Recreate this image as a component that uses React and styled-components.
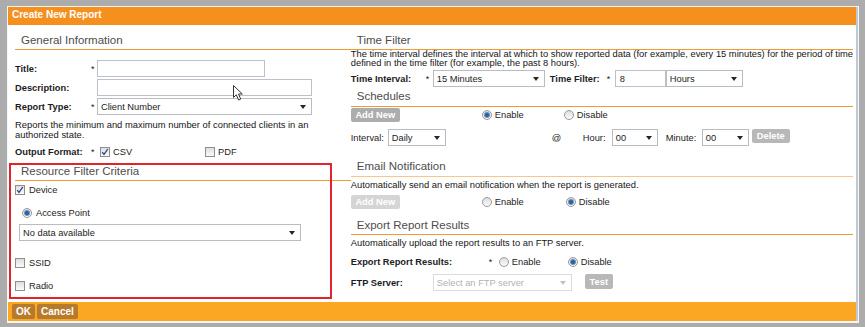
import React from 'react';
import styled, { createGlobalStyle } from 'styled-components';

const Global = createGlobalStyle`
  html, body { margin: 0; padding: 0; background: #acacac; }
  body { font-family: "Liberation Sans", Arial, sans-serif; color: #1c1c1c; }
`;

const Frame = styled.div`
  width: 865px;
  height: 327px;
  box-sizing: border-box;
  padding: 6px 6px 4px 7px;
  background: #acacac;
`;

const Chrome = styled.div`
  background: #f6f6f6;
  padding: 1px 1px 2px 1px;
`;

const Dialog = styled.div`
  position: relative;
  height: 314px;
  border-right: 2px solid #c3c8d5;
  background: #fff;
  display: flex;
  flex-direction: column;
`;

const TitleBar = styled.div`
  height: 18px;
  background: #f5901f;
  color: #fff;
  font-weight: bold;
  font-size: 10px;
  line-height: 16px;
  padding-left: 4px;
`;

const Body = styled.div`
  height: 277px;
  display: flex;
`;

const LeftCol = styled.div`
  width: 343px;
  box-sizing: border-box;
  padding-left: 7px;
  display: flex;
  flex-direction: column;
`;

const RightCol = styled.div`
  flex: 1;
  padding-right: 3px;
  display: flex;
  flex-direction: column;
`;

const Header = styled.div`
  font-size: 11.5px;
  line-height: 14px;
  color: #4d4d4d;
  padding: ${p => p.$pt}px 0 ${p => p.$pb}px 6px;
  border-bottom: 1px solid ${p => p.$light ? '#f8c590' : '#f29a3a'};
`;

const Row = styled.div`
  display: flex;
  align-items: center;
  height: ${p => p.$h || 17}px;
  margin-top: ${p => p.$mt || 0}px;
  padding-left: ${p => p.$pl || 0}px;
  font-size: 9.3px;
`;

const Label = styled.span`
  width: ${p => p.$w}px;
  flex: none;
  font-weight: bold;
  font-size: 9.3px;
  color: #1c1c1c;
  white-space: nowrap;
  margin-left: ${p => p.$ml || 0}px;
`;

const Star = styled.span`
  width: ${p => p.$w}px;
  flex: none;
  font-size: 9px;
  color: #222;
`;

const Para = styled.div`
  font-size: ${p => p.$fs || 9.4}px;
  line-height: ${p => p.$lh || 10}px;
  margin-top: ${p => p.$mt || 0}px;
  color: #151515;
  white-space: nowrap;
`;

const TextBox = styled.div`
  width: ${p => p.$w}px;
  height: ${p => p.$h || 17}px;
  box-sizing: border-box;
  border: 1px solid #bcc0c8;
  background: #fff;
  flex: none;
  display: flex;
  align-items: center;
  padding-left: 4px;
  font-size: 9.3px;
`;

const SelectBox = styled.div`
  width: ${p => p.$w}px;
  height: 17px;
  box-sizing: border-box;
  border: 1px solid ${p => p.$disabled ? '#dcdcdc' : '#b8bcc5'};
  background: #fff;
  flex: none;
  display: flex;
  align-items: center;
  justify-content: space-between;
  padding: 0 5px 0 3px;
  font-size: 9.3px;
  color: ${p => p.$disabled ? '#b2b2b2' : '#1c1c1c'};
  margin-left: ${p => p.$ml || 0}px;
`;

const Arrow = styled.span`
  width: 0;
  height: 0;
  border-left: 3.5px solid transparent;
  border-right: 3.5px solid transparent;
  border-top: 4.5px solid ${p => p.$disabled ? '#c2c2c2' : '#262626'};
`;

const GrayButton = styled.span`
  display: inline-flex;
  align-items: center;
  justify-content: center;
  flex: none;
  width: ${p => p.$w}px;
  height: ${p => p.$h || 14}px;
  margin-left: ${p => p.$ml || 0}px;
  align-self: ${p => p.$top ? 'flex-start' : 'center'};
  background: ${p => (p.$disabled ? '#d5d5d5' : p.$tone || '#adadad')};
  color: #fff;
  font-weight: bold;
  font-size: 9.3px;
  border-radius: 2px;
`;

const Box = styled.span`
  width: 10px;
  height: 10px;
  box-sizing: border-box;
  border: 1px solid #8e8e8e;
  background: linear-gradient(#dedede, #fbfbfb);
  display: inline-flex;
  align-items: center;
  justify-content: center;
  flex: none;
`;

const Round = styled(Box)`
  border-radius: 50%;
  border-color: #9a9a9a;
`;

const Dot = styled.span`
  width: 4px;
  height: 4px;
  border-radius: 50%;
  background: #1f64a8;
  box-shadow: 0 0 0 1px #6d8fb3;
`;

const OptText = styled.span`
  margin-left: ${p => p.$gap || 4}px;
  font-size: 9.3px;
  color: #1c1c1c;
  white-space: nowrap;
`;

const Option = styled.span`
  display: inline-flex;
  align-items: center;
  width: ${p => (p.$w ? p.$w + 'px' : 'auto')};
  margin-left: ${p => p.$ml || 0}px;
  flex: none;
`;

const Plain = styled.span`
  font-size: 9.3px;
  margin-left: ${p => p.$ml || 0}px;
  width: ${p => (p.$w ? p.$w + 'px' : 'auto')};
  flex: none;
  white-space: nowrap;
`;

const Footer = styled.div`
  height: 19px;
  background: #fba724;
  display: flex;
  align-items: center;
  gap: 2px;
  padding-left: 4px;
`;

const FootButton = styled.span`
  height: 15px;
  padding: 0 ${p => p.$px}px;
  background: #b67a2c;
  color: #fff;
  font-weight: bold;
  font-size: 10px;
  border-radius: 2px;
  display: inline-flex;
  align-items: center;
`;

const Annotation = styled.div`
  position: absolute;
  left: 1px;
  top: 156px;
  width: 323px;
  height: 136px;
  box-sizing: border-box;
  border: 2px solid #e3232b;
  pointer-events: none;
`;

const Cursor = styled.svg`
  position: absolute;
  left: 224px;
  top: 77px;
`;

const Check = ({ checked }) => (
  <Box>
    {checked && (
      <svg width="8" height="8" viewBox="0 0 8 8">
        <path d="M1.2 4.2 L3 6.4 L6.8 1" fill="none" stroke="#2b4488" strokeWidth="1.3" />
      </svg>
    )}
  </Box>
);

const Radio = ({ checked }) => <Round>{checked && <Dot />}</Round>;

const Select = ({ w, value, disabled, ml }) => (
  <SelectBox $w={w} $disabled={disabled} $ml={ml}>
    <span>{value}</span>
    <Arrow $disabled={disabled} />
  </SelectBox>
);

export default function App() {
  return (
    <>
      <Global />
      <Frame>
        <Chrome>
          <Dialog>
            <TitleBar>Create New Report</TitleBar>
            <Body>
              <LeftCol>
                <Header $pt={8} $pb={2}>General Information</Header>
                <Row $mt={10}>
                  <Label $w={76}>Title:</Label>
                  <Star $w={6}>*</Star>
                  <TextBox $w={168} />
                </Row>
                <Row $mt={2}>
                  <Label $w={76}>Description:</Label>
                  <Star $w={6} />
                  <TextBox $w={215} />
                </Row>
                <Row $mt={2}>
                  <Label $w={76}>Report Type:</Label>
                  <Star $w={6}>*</Star>
                  <Select w={215} value="Client Number" />
                </Row>
                <Para $mt={5}>
                  Reports the minimum and maximum number of connected clients in an
                  <br />
                  authorized state.
                </Para>
                <Row $mt={5} $h={14}>
                  <Label $w={76}>Output Format:</Label>
                  <Star $w={9}>*</Star>
                  <Option $w={105}>
                    <Check checked />
                    <OptText $gap={3}>CSV</OptText>
                  </Option>
                  <Option>
                    <Check />
                    <OptText $gap={3}>PDF</OptText>
                  </Option>
                </Row>
                <Header $pt={5} $pb={2}>Resource Filter Criteria</Header>
                <Row $mt={3} $h={12}>
                  <Check checked />
                  <OptText>Device</OptText>
                </Row>
                <Row $mt={10} $h={13} $pl={7}>
                  <Radio checked />
                  <OptText>Access Point</OptText>
                </Row>
                <Row $mt={5} $pl={4}>
                  <Select w={282} value="No data available" />
                </Row>
                <Row $mt={16} $h={12}>
                  <Check />
                  <OptText>SSID</OptText>
                </Row>
                <Row $mt={11} $h={12}>
                  <Check />
                  <OptText>Radio</OptText>
                </Row>
              </LeftCol>
              <RightCol>
                <Header $pt={8} $pb={2}>Time Filter</Header>
                <Para $fs={9.35} $lh={9}>
                  The time interval defines the interval at which to show reported data (for example, every 15 minutes) for the period of time
                  <br />
                  defined in the time filter (for example, the past 8 hours).
                </Para>
                <Row $mt={2}>
                  <Label $w={75}>Time Interval:</Label>
                  <Star $w={7}>*</Star>
                  <Select w={112} value="15 Minutes" />
                  <Label $w={57} $ml={5}>Time Filter:</Label>
                  <Star $w={8}>*</Star>
                  <TextBox $w={51}>8</TextBox>
                  <Select w={77} value="Hours" />
                </Row>
                <Header $pt={2} $pb={3}>Schedules</Header>
                <Row $mt={1} $h={14}>
                  <GrayButton $w={49}>Add New</GrayButton>
                  <Option $w={82} $ml={82}>
                    <Radio checked />
                    <OptText $gap={3}>Enable</OptText>
                  </Option>
                  <Option>
                    <Radio />
                    <OptText $gap={3}>Disable</OptText>
                  </Option>
                </Row>
                <Row $mt={7}>
                  <Plain $w={37}>Interval:</Plain>
                  <Select w={58} value="Daily" />
                  <Plain $ml={106} $w={31}>@</Plain>
                  <Plain $w={29}>Hour:</Plain>
                  <Select w={46} value="00" />
                  <Plain $ml={8} $w={36}>Minute:</Plain>
                  <Select w={47} value="00" />
                  <GrayButton $w={38} $ml={3} $top $tone="#b8b8b8">Delete</GrayButton>
                </Row>
                <Header $pt={13} $pb={3} $light>Email Notification</Header>
                <Para $fs={9.35} $lh={9} $mt={4}>
                  Automatically send an email notification when the report is generated.
                </Para>
                <Row $mt={5} $h={14}>
                  <GrayButton $w={49} $disabled>Add New</GrayButton>
                  <Option $w={84} $ml={82}>
                    <Radio />
                    <OptText $gap={3}>Enable</OptText>
                  </Option>
                  <Option>
                    <Radio checked />
                    <OptText $gap={3}>Disable</OptText>
                  </Option>
                </Row>
                <Header $pt={9} $pb={2}>Export Report Results</Header>
                <Para $fs={9.35} $lh={9} $mt={4}>
                  Automatically upload the report results to an FTP server.
                </Para>
                <Row $mt={7} $h={14}>
                  <Label $w={138}>Export Report Results:</Label>
                  <Star $w={10}>*</Star>
                  <Option $w={69}>
                    <Radio />
                    <OptText $gap={3}>Enable</OptText>
                  </Option>
                  <Option>
                    <Radio checked />
                    <OptText $gap={3}>Disable</OptText>
                  </Option>
                </Row>
                <Row $mt={5}>
                  <Label $w={82}>FTP Server:</Label>
                  <Select w={139} value="Select an FTP server" disabled />
                  <GrayButton $w={28} $ml={13} $h={15} $top $tone="#b8b8b8">Test</GrayButton>
                </Row>
              </RightCol>
            </Body>
            <Footer>
              <FootButton $px={4}>OK</FootButton>
              <FootButton $px={4}>Cancel</FootButton>
            </Footer>
            <Annotation />
            <Cursor width="14" height="18" viewBox="0 0 14 18">
              <path d="M1.5 1.5 L1.5 13.5 L4.3 10.8 L6.6 16 L8.7 15.1 L6.5 10 L10.3 10 Z" fill="#fff" stroke="#333" strokeWidth="1" strokeLinejoin="round" />
            </Cursor>
          </Dialog>
        </Chrome>
      </Frame>
    </>
  );
}
